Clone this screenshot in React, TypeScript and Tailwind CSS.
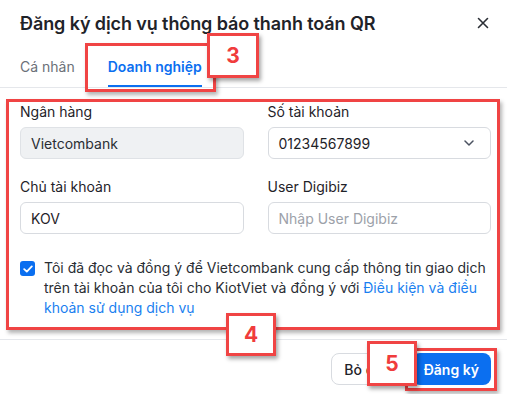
import React from "react";

const font = { fontFamily: "Inter, 'Noto Sans', sans-serif" };

function Field({ label, children }: { label: string; children: React.ReactNode }) {
  return (
    <div className="flex flex-col">
      <div className="h-5 text-[14px] leading-5 text-[#1f2329]">{label}</div>
      <div className="mt-[5px]">{children}</div>
    </div>
  );
}

function Label({ n, className }: { n: string; className: string }) {
  return (
    <div
      className={`absolute flex items-center justify-center bg-white border-[3px] border-[#f04444] text-[#f03c3c] font-bold text-[21px] shadow-[2px_3px_4px_rgba(0,0,0,0.35)] ${className}`}
    >
      {n}
    </div>
  );
}

export default function App() {
  return (
    <div className="relative w-[507px] h-[394px] bg-white overflow-hidden text-[#1f2329]" style={font}>
      {/* Header */}
      <div className="flex items-center justify-between pl-5 pr-[16px] h-[46px]">
        <div className="text-[18px] font-semibold tracking-[-0.1px]">Đăng ký dịch vụ thông báo thanh toán QR</div>
        <svg width="12" height="12" viewBox="0 0 12 12" className="mr-[2px]">
          <path d="M1.5 1.5L10.5 10.5M10.5 1.5L1.5 10.5" stroke="#2b2f36" strokeWidth="1.6" strokeLinecap="round" />
        </svg>
      </div>

      {/* Tabs */}
      <div className="flex gap-[33px] pl-5 border-b border-[#e5e7eb] h-[42px]">
        <div className="flex items-center text-[14px] text-[#6b7078] h-[41px]">Cá nhân</div>
        <div className="flex items-center text-[14px] font-semibold text-[#0b6ff0] h-[41px] border-b-2 border-[#0b6ff0] pt-[2px]">
          Doanh nghiệp
        </div>
      </div>

      {/* Body */}
      <div className="pl-5 pr-4 pt-[14px] pb-[21px] border-b border-[#e5e7eb]">
        <div className="grid grid-cols-2 gap-x-6 gap-y-[18px]">
          <Field label="Ngân hàng">
            <div className="h-8 rounded-md border border-[#dfe2e6] bg-[#eff1f3] px-[10px] flex items-center text-[14px] text-[#2a2e34]">
              Vietcombank
            </div>
          </Field>
          <Field label="Số tài khoản">
            <div className="h-8 rounded-md border border-[#d8dbe0] bg-white px-[10px] flex items-center justify-between text-[14px]">
              <span>01234567899</span>
              <svg width="10" height="6" viewBox="0 0 10 6" className="mr-[6px]">
                <path d="M1 1L5 5L9 1" stroke="#4b5260" strokeWidth="1.5" fill="none" strokeLinecap="round" strokeLinejoin="round" />
              </svg>
            </div>
          </Field>
          <Field label="Chủ tài khoản">
            <div className="h-8 rounded-md border border-[#d8dbe0] bg-white px-[10px] flex items-center text-[14px]">KOV</div>
          </Field>
          <Field label="User Digibiz">
            <div className="h-8 rounded-md border border-[#d8dbe0] bg-white px-[10px] flex items-center text-[14px] text-[#9ca1a9]">
              Nhập User Digibiz
            </div>
          </Field>
        </div>
        <div className="flex gap-[9px] mt-6">
          <div className="mt-[3px] w-[15px] h-[15px] shrink-0 rounded-[3px] bg-[#0b6ff0] flex items-center justify-center">
            <svg width="10" height="8" viewBox="0 0 10 8">
              <path d="M1.2 4.2L3.8 6.6L8.8 1.4" stroke="white" strokeWidth="1.8" fill="none" strokeLinecap="round" strokeLinejoin="round" />
            </svg>
          </div>
          <p className="text-[14px] leading-5 text-[#2a2e34]">
            Tôi đã đọc và đồng ý để Vietcombank cung cấp thông tin giao dịch trên tài khoản của tôi cho KiotViet và đồng ý với{" "}
            <span className="text-[#1a7ff0]">Điều kiện và điều khoản sử dụng dịch vụ</span>
          </p>
        </div>
      </div>

      {/* Footer */}
      <div className="flex justify-end gap-2 pr-4 pt-[13px]">
        <div className="h-8 px-3 rounded-lg border border-[#d8dbe0] flex items-center text-[14px] font-medium text-[#1f2329]">Bỏ qua</div>
        <div className="h-8 px-3 rounded-lg bg-[#0b6ff0] flex items-center text-[14px] font-semibold text-white">Đăng ký</div>
      </div>

      {/* Annotations */}
      <div className="absolute left-[85px] top-[43px] w-[131px] h-[49px] border-[3px] border-[#f04444] shadow-[2px_3px_4px_rgba(0,0,0,0.3)]" />
      <Label n="3" className="left-[207px] top-[33px] w-[52px] h-[45px]" />
      <div className="absolute left-[6px] top-[99px] w-[494px] h-[231px] border-[3px] border-[#f04444] shadow-[2px_3px_4px_rgba(0,0,0,0.3)]" />
      <Label n="4" className="left-[226px] top-[313px] w-[50px] h-[43px]" />
      <div className="absolute left-[405px] top-[348px] w-[92px] h-[43px] border-[3px] border-[#f04444] shadow-[2px_3px_4px_rgba(0,0,0,0.3)]" />
      <Label n="5" className="left-[367px] top-[341px] w-[50px] h-[45px]" />
    </div>
  );
}
